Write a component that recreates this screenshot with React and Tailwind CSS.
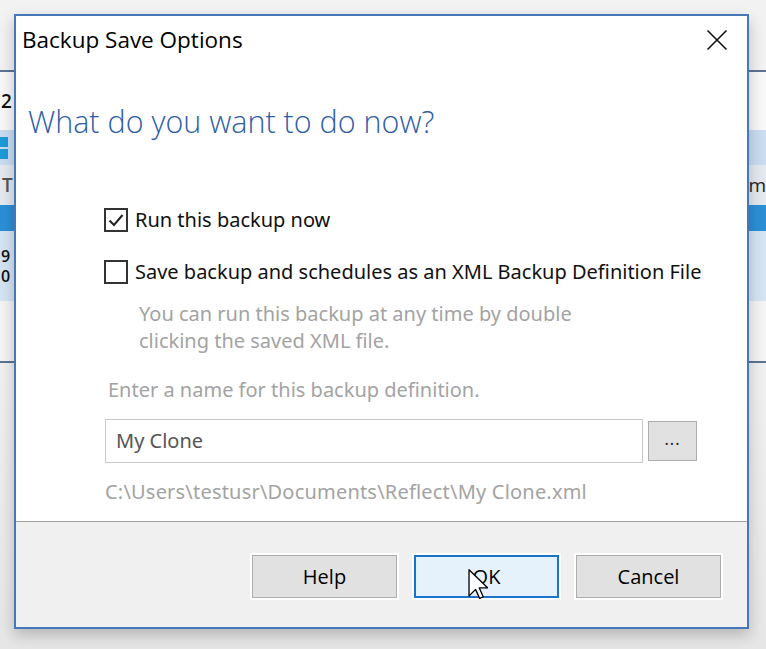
import React from "react";

const sans = "font-['Open_Sans','Noto_Sans',sans-serif]";
const body = "font-['Noto_Sans','Open_Sans',sans-serif]";

const Checkbox = ({ checked }) => (
  <div className="w-6 h-6 border-2 border-[#333] bg-white flex items-center justify-center shrink-0">
    {checked && (
      <svg width="18" height="18" viewBox="0 0 18 18" fill="none">
        <path d="M2.5 9.5L7 14L15.5 4" stroke="#222" strokeWidth="2" />
      </svg>
    )}
  </div>
);

const DlgButton = ({ label, primary }) => (
  <button
    className={`w-[145px] h-[43px] text-[20px] text-black ${sans} shadow-[0_0_0_2px_#fff] ${
      primary ? "border-2 border-[#1a73c9] bg-[#e5f1fb]" : "border border-[#adadad] bg-[#e1e1e1]"
    }`}
  >
    {label}
  </button>
);

export default function App() {
  return (
    <div className="relative w-[766px] h-[649px] overflow-hidden bg-[#f0f0f0]">
      {/* Background app window */}
      <div className={`flex flex-col text-[17px] font-semibold text-[#111] ${sans}`}>
        <div className="h-[70px] bg-[#f2f2f2]" />
        <div className="h-[2px] bg-[#5d7390]" />
        <div className="h-[58px] bg-[#f8f8f8] flex items-center pl-[1px] text-[19px]">2</div>
        <div className="h-[35px] bg-[#c9dcf0] flex items-center">
          <div className="flex flex-col gap-[2px]">
            <div className="w-[8px] h-[10px] bg-[#1e9ad8]" />
            <div className="w-[8px] h-[10px] bg-[#1e9ad8]" />
          </div>
        </div>
        <div className="h-[40px] bg-[#e4e9ef] flex items-center justify-between pl-[2px] text-[19px] text-[#555]">
          <span>T</span>
          <span className="text-[#222] font-normal">im</span>
        </div>
        <div className="h-[26px] bg-[#2b8fd6]" />
        <div className="h-[70px] bg-[#d5e4f3] flex flex-col justify-center gap-[2px] text-[16px] leading-[18px] pl-[1px]">
          <span>9</span>
          <span>0</span>
        </div>
        <div className="h-[60px] bg-[#f4f4f4]" />
        <div className="h-[2px] bg-[#5d7390]" />
        <div className="h-[287px] bg-gradient-to-b from-[#f0f0f0] to-[#e6e6e6]" />
      </div>

      {/* Dialog */}
      <div className="absolute left-[14px] top-[14px] w-[735px] h-[615px] border-2 border-[#4677b8] bg-white flex flex-col shadow-[0_6px_14px_rgba(0,0,0,0.22)]">
        <div className="h-[48px] flex items-center justify-between pl-[6px] pr-[19px] shrink-0">
          <span className={`text-[22.5px] text-black ${sans}`}>Backup Save Options</span>
          <svg width="22" height="22" viewBox="0 0 22 22" fill="none">
            <path d="M1.5 1.5L20.5 20.5M20.5 1.5L1.5 20.5" stroke="#111" strokeWidth="1.6" />
          </svg>
        </div>

        <div className={`mt-[37px] pl-[12px] text-[30.5px] leading-[40px] font-light text-[#2f5da6] ${sans}`}>
          What do you want to do now?
        </div>

        <div className={`mt-[67px] pl-[88px] flex flex-col gap-[28px] text-[20px] text-[#111] ${body}`}>
          <div className="flex items-center gap-[7px] h-6">
            <Checkbox checked />
            <span>Run this backup now</span>
          </div>
          <div className="flex items-center gap-[7px] h-6">
            <Checkbox />
            <span>Save backup and schedules as an XML Backup Definition File</span>
          </div>
        </div>

        <div className={`mt-[16px] pl-[123px] text-[20px] leading-[27px] text-[#a3a3a3] ${body}`}>
          You can run this backup at any time by double
          <br />
          clicking the saved XML file.
        </div>

        <div className={`mt-[22px] pl-[92px] text-[20px] leading-[27px] text-[#a3a3a3] ${body}`}>
          Enter a name for this backup definition.
        </div>

        <div className="mt-[16px] pl-[89px] flex items-center gap-[5px]">
          <div className={`w-[538px] h-[44px] border border-[#c9c9c9] bg-white flex items-center pl-[10px] text-[20px] text-[#555] ${body}`}>
            My Clone
          </div>
          <div className="w-[49px] h-[40px] border border-[#adadad] bg-[#e1e1e1] flex items-center justify-center text-[16px] text-[#222] tracking-[1px] pb-[4px]">
            ...
          </div>
        </div>

        <div className={`mt-[15px] pl-[89px] text-[20px] leading-[27px] tracking-[0.2px] text-[#a3a3a3] ${body}`}>
          C:\Users\testusr\Documents\Reflect\My Clone.xml
        </div>

        <div className="mt-auto h-[106px] border-t border-[#a0a0a0] bg-[#f0f0f0] flex items-start justify-end gap-[17px] pt-[33px] pr-[26px]">
          <DlgButton label="Help" />
          <DlgButton label="OK" primary />
          <DlgButton label="Cancel" />
        </div>
      </div>

      {/* Mouse pointer */}
      <svg className="absolute left-[468px] top-[569px]" width="20" height="31" viewBox="0 0 12 19" fill="none">
        <path
          d="M0.5 0.5V16.5L4.5 12.5L7 18L9.2 17L6.8 11.6H12L0.5 0.5Z"
          fill="#fff"
          stroke="#000"
          strokeWidth="0.8"
          strokeLinejoin="round"
        />
      </svg>
    </div>
  );
}
